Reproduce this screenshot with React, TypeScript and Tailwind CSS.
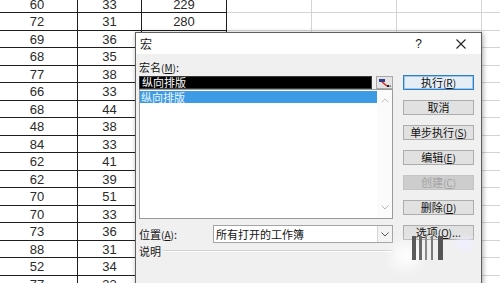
import React from 'react';

const col1 = ['60', '72', '69', '68', '77', '66', '68', '48', '84', '62', '62', '70', '70', '73', '88', '52', '77'];
const col2 = ['33', '31', '36', '35', '38', '33', '44', '38', '33', '41', '39', '51', '33', '36', '31', '34', '33'];
const col3 = ['229', '280', '', '', '', '', '', '', '', '', '', '', '', '', '', '', ''];

const CJK = { fontFamily: '"Noto Sans CJK SC", "Noto Sans", sans-serif' };

function Key({ k }: { k: string }) {
  return (
    <span className="text-[10px]">
      (<span className="underline">{k}</span>)
    </span>
  );
}

function Btn({ label, k, suffix, focused, disabled }: { label: string; k?: string; suffix?: string; focused?: boolean; disabled?: boolean }) {
  return (
    <div
      className={
        'h-[15px] flex items-center justify-center text-[11px] leading-[13px] ' +
        (focused
          ? 'border border-[#2f7fc6] bg-[#e5eef7] text-[#111] shadow-[inset_0_0_0_1px_#9cc6ea]'
          : disabled
          ? 'border border-[#c4c4c4] bg-[#cdcdcd] text-[#a3a3a3]'
          : 'border border-[#adadad] bg-[#e1e1e1] text-[#111]')
      }
    >
      {label}
      {k ? <Key k={k} /> : null}
      {suffix}
    </div>
  );
}

export default function App() {
  return (
    <div className="relative w-[500px] h-[283px] overflow-hidden bg-white">
      {/* spreadsheet */}
      <div className="-mt-[4.5px] text-[13px] leading-[14px] text-[#2a2a2a]" style={{ fontFamily: '"Liberation Sans", Arial, sans-serif' }}>
        {col1.map((a, i) => (
          <div key={i} className="flex h-[17.5px]">
            <div className="w-[78px] shrink-0 border-r border-b border-[#1e1e1e] flex items-center justify-center pt-[2px] pr-[3px]">{a}</div>
            <div className="w-[64px] shrink-0 border-r border-b border-[#1e1e1e] flex items-center justify-center pt-[2px]">{col2[i]}</div>
            <div className="w-[85px] shrink-0 border-r border-b border-[#1e1e1e] flex items-center justify-center pt-[2px]">{col3[i]}</div>
            <div className="w-[85px] shrink-0 border-r border-b border-[#d4d4d4]" />
            <div className="w-[85px] shrink-0 border-r border-b border-[#d4d4d4]" />
            <div className="w-[85px] shrink-0 border-r border-b border-[#d4d4d4]" />
            <div className="flex-1 border-b border-[#d4d4d4]" />
          </div>
        ))}
      </div>

      {/* dialog */}
      <div
        className="absolute left-[135px] top-[32px] w-[347px] h-[260px] border border-[#5f5f5f] bg-[#f0f0f0] shadow-[1px_1px_5px_rgba(0,0,0,0.35)] flex flex-col text-[#151515]"
        style={CJK}
      >
        <div className="h-[21px] shrink-0 bg-white flex items-center pl-[4px] pr-[15px] text-[12px] leading-[14px]">
          <span>宏</span>
          <span className="ml-auto text-[12px]" style={{ fontFamily: '"Liberation Sans", sans-serif' }}>?</span>
          <svg className="ml-[34px]" width="10" height="10" viewBox="0 0 10 10">
            <path d="M0.5 0.5L9.5 9.5M9.5 0.5L0.5 9.5" stroke="#222" strokeWidth="1.1" />
          </svg>
        </div>
        <div className="flex flex-1 pl-[3px]">
          <div className="w-[254px] shrink-0 flex flex-col">
            <div className="h-[22px] pt-[7px] text-[11px] leading-[12px]">
              宏名<Key k="M" />:
            </div>
            <div className="flex h-[13px] gap-[4px]">
              <div className="w-[233px] bg-black border border-[#3a3a3a] flex items-center pl-[2px] text-[11px] leading-[11px] text-white">纵向排版</div>
              <div className="w-[17px] border border-[#a8a8a8] bg-[#e4e4e4] flex items-center justify-center">
                <svg width="13" height="10" viewBox="0 0 13 10">
                  <rect x="1" y="1" width="6" height="3" fill="#2d3f86" />
                  <path d="M4 4L9 8" stroke="#d42a2a" strokeWidth="1.6" />
                  <rect x="9" y="7" width="2" height="2" fill="#222" />
                  <rect x="11.5" y="7.5" width="1.2" height="1.2" fill="#222" />
                </svg>
              </div>
            </div>
            <div className="h-[130px] border border-[#9a9a9a] bg-white flex">
              <div className="flex-1 pt-[1px]">
                <div className="h-[12px] bg-[#3c9be4] text-[#eef7ff] text-[11px] leading-[12px] pl-[1px]">纵向排版</div>
              </div>
              <div className="w-[15px] bg-[#fbfbfb] flex flex-col items-center justify-between py-[8px]">
                <svg width="8" height="5" viewBox="0 0 8 5">
                  <path d="M0.5 4.5L4 1L7.5 4.5" fill="none" stroke="#c2c2c2" strokeWidth="1" />
                </svg>
                <svg width="8" height="5" viewBox="0 0 8 5">
                  <path d="M0.5 0.5L4 4L7.5 0.5" fill="none" stroke="#b5b5b5" strokeWidth="1" />
                </svg>
              </div>
            </div>
            <div className="mt-[6px] h-[18px] flex items-center">
              <div className="w-[74px] text-[11px] leading-[12px]">
                位置<Key k="A" />:
              </div>
              <div className="flex-1 h-full border border-[#a4a4a4] bg-white flex items-center">
                <div className="flex-1 pl-[2px] text-[11px] leading-[12px] text-[#111]">所有打开的工作簿</div>
                <div className="w-[15px] h-full border-l border-[#d6d6d6] bg-[#f3f3f3] flex items-center justify-center">
                  <svg width="8" height="5" viewBox="0 0 8 5">
                    <path d="M0.5 0.5L4 4L7.5 0.5" fill="none" stroke="#555" strokeWidth="1" />
                  </svg>
                </div>
              </div>
            </div>
            <div className="mt-[1px] h-[14px] flex items-center">
              <span className="text-[11px] leading-[12px]">说明</span>
              <div className="flex-1 ml-[2px] border-t border-[#d2d2d2] border-b border-b-white" />
            </div>
          </div>
          <div className="ml-[10px] w-[71px] shrink-0 pt-[21px] flex flex-col gap-[10px]">
            <Btn label="执行" k="R" focused />
            <Btn label="取消" />
            <Btn label="单步执行" k="S" />
            <Btn label="编辑" k="E" />
            <Btn label="创建" k="C" disabled />
            <Btn label="删除" k="D" />
            <Btn label="选项" k="O" suffix="..." />
          </div>
        </div>
      </div>

      {/* watermark artifacts */}
      <div className="absolute left-[392px] top-[242px] w-[28px] h-[28px] rounded-full bg-white/80 blur-[6px]" />
      <div className="absolute left-[412px] top-[236px] w-[4px] h-[24px] bg-[#5a5a5a]" />
      <div className="absolute left-[419px] top-[236px] w-[3px] h-[24px] bg-[#6a6a6a]" />
      <div className="absolute left-[425px] top-[236px] w-[2px] h-[24px] bg-[#8a8a8a]" />
      <div className="absolute left-[431px] top-[236px] w-[2px] h-[24px] bg-[#7a7a7a]" />
      <div className="absolute left-[438px] top-[236px] w-[5px] h-[24px] bg-[#555555]" />
      <div className="absolute left-[456px] top-[238px] w-[18px] h-[12px] rounded-full bg-[#eef0ff] blur-[3px]" />
    </div>
  );
}
